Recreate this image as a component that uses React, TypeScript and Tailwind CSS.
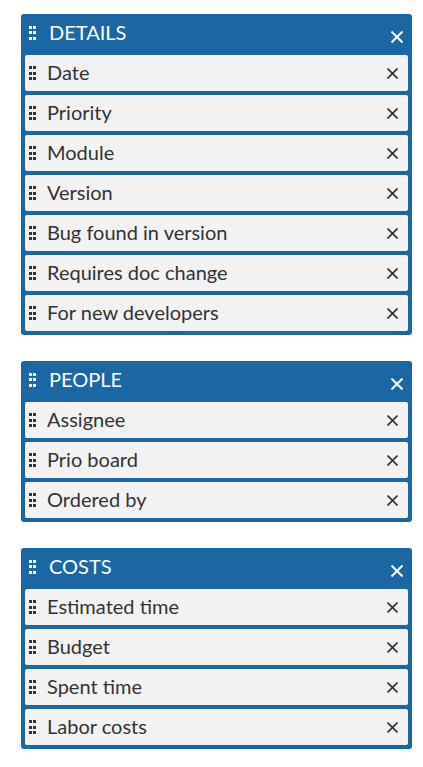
const GROUPS = [
  {
    title: 'DETAILS',
    items: ['Date', 'Priority', 'Module', 'Version', 'Bug found in version', 'Requires doc change', 'For new developers'],
  },
  { title: 'PEOPLE', items: ['Assignee', 'Prio board', 'Ordered by'] },
  { title: 'COSTS', items: ['Estimated time', 'Budget', 'Spent time', 'Labor costs'] },
]

function Handle({ light }: { light?: boolean }) {
  const dot = light ? 'bg-white' : 'bg-[#333333]'
  return (
    <div className="grid grid-cols-2 gap-x-[1px] gap-y-[2.5px] w-[7px] shrink-0">
      {Array.from({ length: 6 }).map((_, i) => (
        <span key={i} className={`block w-[3px] h-[3px] ${dot}`} />
      ))}
    </div>
  )
}

function Cross({ size, stroke }: { size: number; stroke: number }) {
  return (
    <svg width={size} height={size} viewBox="0 0 10 10" className="shrink-0">
      <path d="M1 1L9 9M9 1L1 9" stroke="currentColor" strokeWidth={stroke} strokeLinecap="square" />
    </svg>
  )
}

export default function App() {
  return (
    <div className="pt-[14px] px-[21px] flex flex-col gap-[26px] w-[423px]" style={{ fontFamily: 'Lato, "Open Sans", sans-serif' }}>
      {GROUPS.map((g) => (
        <div key={g.title} className="w-[391px] bg-[#1a67a3] rounded-[3px] px-[4px] pb-[4px] flex flex-col gap-[4px]">
          <div className="h-[37px] flex items-center pl-[4px] pr-[5px] text-white">
            <Handle light />
            <span className="ml-[13px] mb-[2px] text-[20px] leading-none">{g.title}</span>
            <span className="ml-auto mt-[9px] flex">
              <Cross size={12} stroke={1.7} />
            </span>
          </div>
          {g.items.map((it) => (
            <div key={it} className="h-[36px] bg-[#f2f2f2] rounded-[2px] flex items-center pl-[4px] pr-[10px] text-[#333333]">
              <Handle />
              <span className="ml-[11px] mb-[2px] text-[20px] leading-none">{it}</span>
              <span className="ml-auto flex">
                <Cross size={11} stroke={1.5} />
              </span>
            </div>
          ))}
        </div>
      ))}
    </div>
  )
}
